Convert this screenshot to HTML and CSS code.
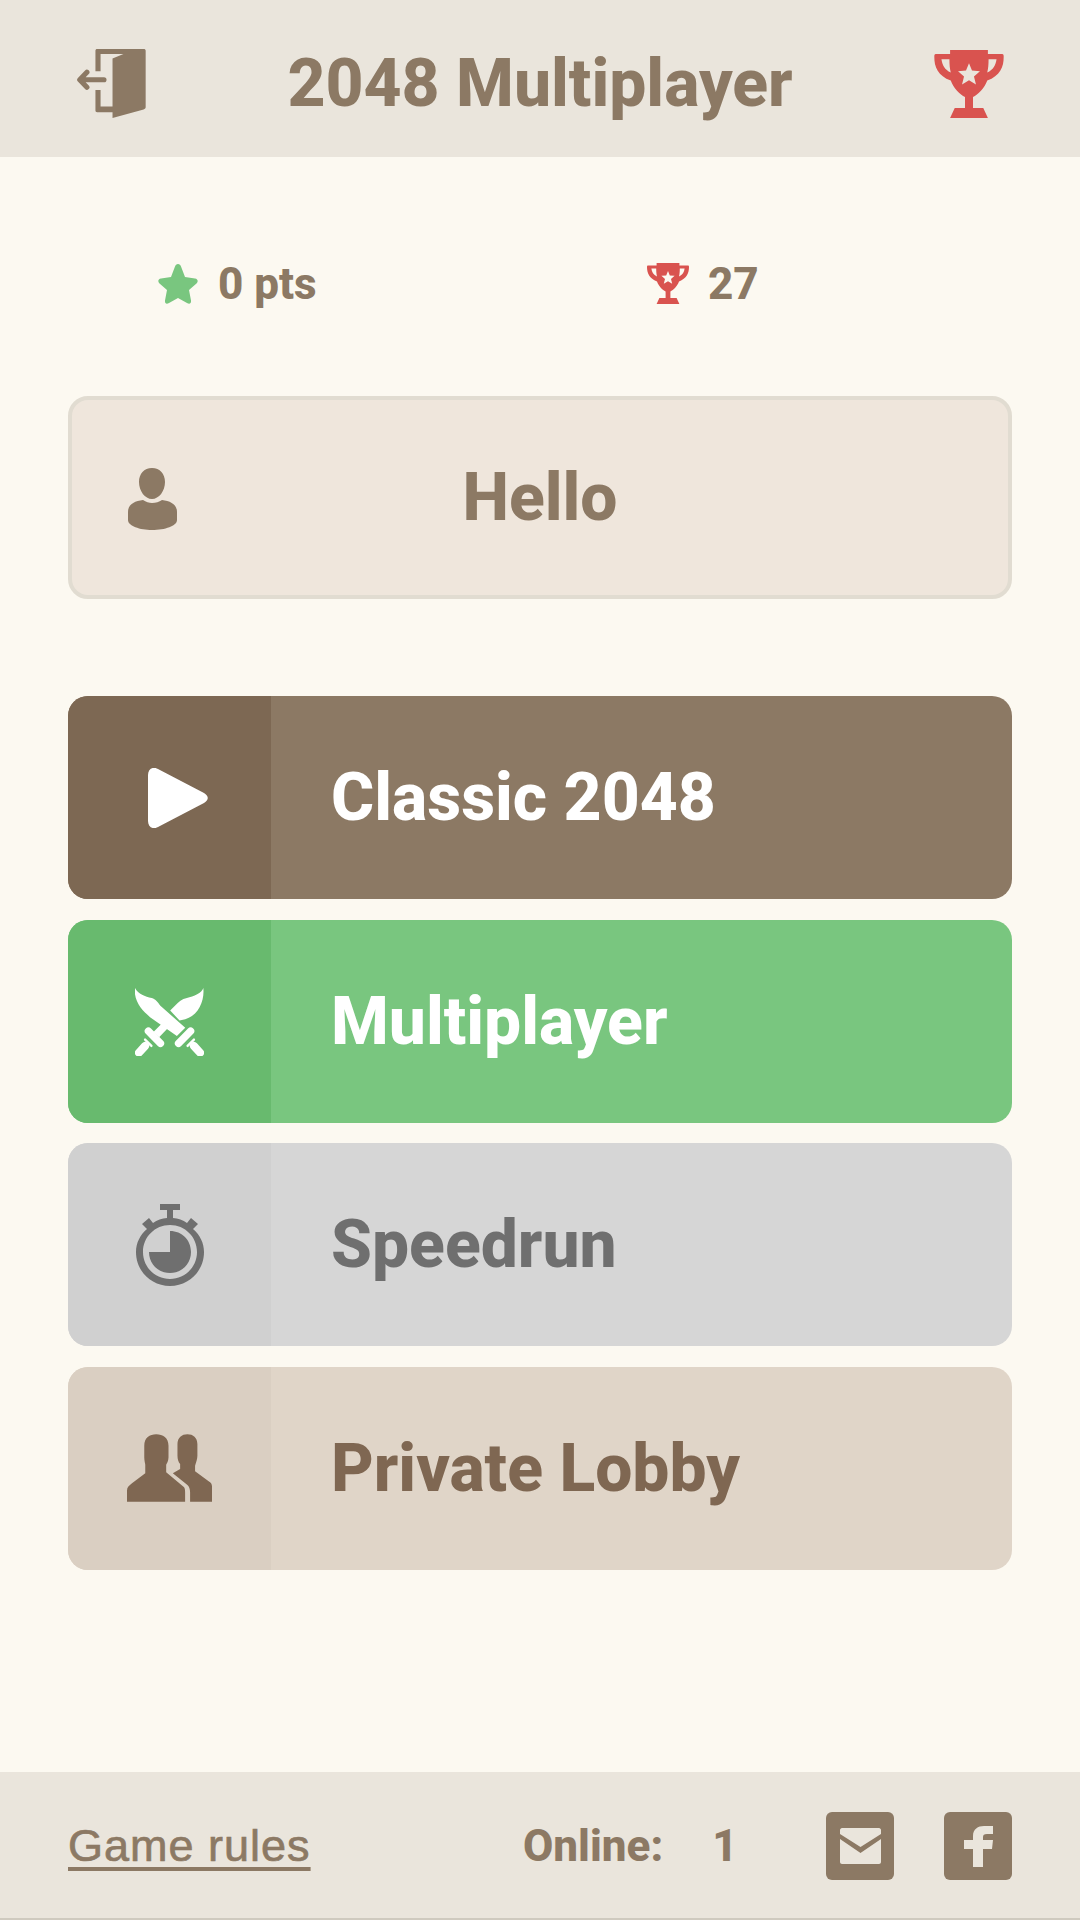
FILE: index.html
```html
<!DOCTYPE html>
<html lang="en">
<head>
<meta charset="utf-8">
<title>2048 Multiplayer</title>
<link rel="stylesheet" href="styles.css">
</head>
<body>
<div class="app">
  <header class="topbar">
    <svg class="exit" viewBox="0 0 200 202">
      <path d="M53 5C53 2 55 0 58 0H194C198 0 200 2 200 5V170C200 174 198 176 194 177L103 202V28L135 15H68V65H53ZM53 120H68V168H103V185H58C55 185 53 183 53 180Z"/>
      <path class="line line-exit" d="M8 90H78M28 68 7 90 28 112"/>
    </svg>
    <h1 class="title">2048 Multiplayer</h1>
    <svg class="cup cup-lg" viewBox="0 0 210 205"><use href="#cup"/></svg>
  </header>
  <main class="content">
    <div class="stats">
      <div class="stat stat-pts">
        <svg class="star" viewBox="0 0 40 40"><path d="M20 0C21.500 0 22.500 1 23 2.500L27 13 37 14.500C40 15 40.500 17.500 38.500 19.500L31 26 33 36.500C33.500 39.500 31.500 40.500 29 39L20 34 11 39C8.500 40.500 6.500 39.500 7 36.500L9 26 1.500 19.500C-.5 17.500 0 15 3 14.500L13 13 17 2.500C17.500 1 18.500 0 20 0Z"/></svg>
        <span>0 pts</span>
      </div>
      <div class="stat stat-wins">
        <svg class="cup cup-sm" viewBox="0 0 210 205"><use href="#cup"/></svg>
        <span>27</span>
      </div>
    </div>
    <div class="name-box">
      <svg class="user" viewBox="0 0 50 62"><path d="M24 0C32 0 37 6 37 14 37 23 31 31 24 31 17 31 11 23 11 14 11 6 16 0 24 0ZM15 32C18 34 21 35 24 35 28 35 31 34 34 32 42 33 49 36 49 44V52C49 58 37 62 24 62 12 62 0 58 0 52V44C0 36 7 33 15 32Z"/></svg>
      <span class="name">Hello</span>
    </div>
    <nav class="modes">
      <a class="mode mode-classic">
        <span class="mode-icon"><svg class="ic-play" viewBox="0 0 60 60"><path d="M0 7C0 1 5-2 10 1L56 25C61 28 61 32 56 35L10 59C5 62 0 59 0 53Z"/></svg></span>
        <span class="mode-label">Classic 2048</span>
      </a>
      <a class="mode mode-multi">
        <span class="mode-icon"><svg class="ic-swords" viewBox="0 0 206 206">
          <path d="M0 3C10 22 30 28 50 33 62 36 68 46 75 55L150 122 125 146 45 90C20 70-5 40 0 3ZM204 3C200 18 175 28 155 33 140 36 130 45 120 55L105 70 133 100 150 96C190 85 208 40 204 3ZM81 108 97 124 72 150 55 134Z"/>
          <path class="line line-guard" d="M130 168 166 132M40 132 76 168"/>
          <path class="line line-grip" d="M157 176 176 157M30 157 49 176"/>
          <path class="line line-pommel" d="M176 176 194 196M30 176 12 196"/>
        </svg></span>
        <span class="mode-label">Multiplayer</span>
      </a>
      <a class="mode mode-speed">
        <span class="mode-icon"><svg class="ic-timer" viewBox="0 0 68 82"><path d="M24 0H44V6H37V14C42 14.500 47 16 51 19L55 14 62 20 57 25C64 31 68 39 68 48 68 67 53 82 34 82 15 82 0 67 0 48 0 39 4 31 11 25L6 20 13 14 17 19C21 16 26 14.500 31 14V6H24ZM34 21C19 21 7 33 7 48 7 63 19 75 34 75 49 75 61 63 61 48 61 33 49 21 34 21ZM34 27C46 27 55 36 55 48 55 60 46 69 34 69 22 69 13 60 13 48H34Z"/></svg></span>
        <span class="mode-label">Speedrun</span>
      </a>
      <a class="mode mode-lobby">
        <span class="mode-icon"><svg class="ic-people" viewBox="0 0 256 204"><path d="M52 35C52 10 68 0 88 0 108 0 125 10 125 35V70C125 80 120 88 118 92V115L172 160C175 165 175 170 175 175V204H0V170C0 160 6 155 15 148L55 118V92C55 88 52 80 52 70ZM152 30C152 10 165 0 182 0 199 0 212 10 212 30V65C212 75 208 85 205 95V112L250 145C254 148 256 152 256 158V204H190V175C190 165 187 158 182 153L138 118 160 105V90C155 85 152 75 152 65Z"/></svg></span>
        <span class="mode-label">Private Lobby</span>
      </a>
    </nav>
  </main>
  <footer class="footer">
    <a class="rules">Game rules</a>
    <div class="online"><span>Online:</span><span>1</span></div>
    <div class="socials">
      <a class="social"><svg class="ic-mail" viewBox="0 0 41 36"><path d="M2 0H39C40 0 41 1 41 2V6L20.500 19 0 6V2C0 1 1 0 2 0ZM0 11 20.500 25 41 11V34C41 35 40 36 39 36H2C1 36 0 35 0 34Z"/></svg></a>
      <a class="social"><svg class="ic-fb" viewBox="0 0 29 41"><path d="M9 41V23H0V14H9V10C9 3 14 0 20 0H29V8H23C20 8 19 9 19 11V14H29L28 23H19V41Z"/></svg></a>
    </div>
  </footer>
</div>
<svg class="defs" aria-hidden="true"><defs>
  <symbol id="cup" viewBox="0 0 210 205">
    <path fill-rule="evenodd" d="M48 0H162V12H205C209 12 210 15 210 20 210 50 198 78 160 92 152 115 132 135 117 142V175H148L162 205H48L62 175H93V142C78 135 58 115 50 92 12 78 0 50 0 20 0 15 1 12 5 12H48ZM22 28C24 45 32 60 50 68 47 55 46 45 46 28ZM188 28H164C164 45 163 55 160 68 178 60 186 45 188 28ZM105 40 96 62 72 64 90 80 84 104 105 91 126 104 120 80 138 64 114 62Z"/>
  </symbol>
</defs></svg>
</body>
</html>
```
FILE: styles.css
```css
* { box-sizing: border-box; }
html, body { margin: 0; padding: 0; }
body { font-family: Roboto, "Liberation Sans", sans-serif; background: #fcf9f1; color: #8c7964; }
.app { width: 1080px; height: 1920px; display: flex; flex-direction: column; }
.defs { width: 0; height: 0; display: block; overflow: hidden; }
svg { display: block; fill: currentColor; }
.line { fill: none; stroke: currentColor; }
.line-exit { stroke-width: 15; stroke-linecap: round; stroke-linejoin: round; }
.line-guard { stroke-width: 22; stroke-linecap: round; }
.line-grip { stroke-width: 7; stroke-linecap: round; }
.line-pommel { stroke-width: 24; stroke-linecap: round; }

.topbar { height: 157px; flex: none; background: #eae5dc; display: flex; align-items: center; justify-content: space-between; padding: 10px 76px 0 77px; }
.exit { width: 69px; height: 69px; }
.title { margin: 0; font-size: 66px; line-height: 70px; font-weight: 800; }
.cup { color: #d9534f; }
.cup-lg { width: 70px; height: 68px; }
.cup-sm { width: 42px; height: 41px; }

.content { flex: 1; padding: 0 68px; display: flex; flex-direction: column; }
.stats { height: 239px; flex: none; display: flex; align-items: center; font-size: 44px; font-weight: 800; padding: 14px 0 0 90px; }
.stat { display: flex; align-items: center; }
.stat-pts { width: 489px; gap: 20px; }
.stat-wins { gap: 19px; }
.star { width: 40px; height: 40px; color: #79c67f; }

.name-box { height: 203px; flex: none; position: relative; display: flex; align-items: center; justify-content: center; background: #efe6dc; border: 4px solid #e1dcd1; border-radius: 20px; }
.user { position: absolute; left: 56px; top: 68px; width: 50px; height: 62px; }
.name { font-size: 66px; font-weight: 800; }

.modes { margin-top: 97px; display: flex; flex-direction: column; gap: 20.5px; }
.mode { height: 203px; display: flex; align-items: center; border-radius: 20px; overflow: hidden; font-size: 66px; font-weight: 800; }
.mode-icon { width: 203px; height: 100%; flex: none; display: flex; align-items: center; justify-content: center; }
.mode-label { padding-left: 60px; }
.mode-classic { background: #8c7964; color: #fff; }
.mode-classic .mode-icon { background: #7d6853; }
.mode-multi { background: #79c67f; color: #fff; }
.mode-multi .mode-icon { background: #68ba6e; }
.mode-speed { background: #d6d6d6; color: #6f6f6f; }
.mode-speed .mode-icon { background: #d0d0d0; }
.mode-lobby { background: #e0d5c8; color: #7f6752; }
.mode-lobby .mode-icon { background: #dacfc2; }
.ic-play { width: 60px; height: 60px; margin-left: 17px; }
.ic-swords { width: 69px; height: 69px; }
.ic-timer { width: 68px; height: 82px; }
.ic-people { width: 85px; height: 68px; }

.footer { height: 148px; flex: none; background: #eae5dc; display: flex; align-items: center; padding: 2px 68px 0; border-bottom: 2px solid #cfcabf; }
.rules { font-family: "Liberation Sans", Arial, sans-serif; font-size: 45px; letter-spacing: 1px; -webkit-text-stroke: 0.7px currentColor; text-decoration: underline; text-decoration-thickness: 4px; text-underline-offset: 6px; width: 455px; }
.online { display: flex; gap: 49px; font-size: 44px; font-weight: 800; }
.socials { margin-left: auto; display: flex; gap: 50px; }
.social { width: 68px; height: 68px; border-radius: 6px; background: #8c7964; color: #eae5dc; display: flex; align-items: center; justify-content: center; }
.ic-mail { width: 41px; height: 36px; }
.ic-fb { width: 29px; height: 41px; }
```
